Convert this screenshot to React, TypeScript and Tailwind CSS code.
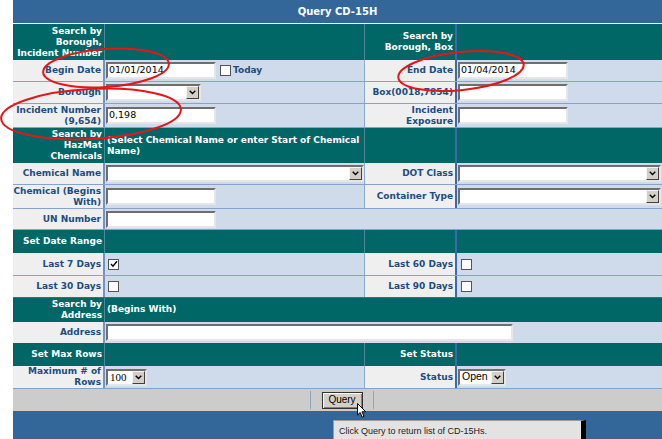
import React from "react";

const GRID = "grid grid-cols-[92px_260px_92px_1fr]";
const LROW = `${GRID} border-b border-[#87a2cc]`;
const TROW = `${GRID} bg-[#006666] text-white font-bold`;
const LBL = "flex items-center justify-end text-right pr-[2px] bg-[#efefef] text-[#1c4d80] font-bold leading-[11px]";
const VAL = "flex items-center pl-[1px] bg-[#cfdbeb]";
const C1 = "border-r-2 border-[#7393c6]";
const C2 = "border-r border-[#8fa9d0]";
const C3 = "border-r-2 border-[#3a69ad]";
const T1 = "border-r border-[#4b8a9a]";
const TCELL = "flex items-center justify-end text-right pr-[2px] leading-[11px]";

function TextBox({ className = "", value = "" }: { className?: string; value?: string }) {
  return (
    <div
      className={`h-[17px] bg-white border-2 border-t-[#6e6e6e] border-l-[#6e6e6e] border-r-[#e6e6e6] border-b-[#e6e6e6] flex items-center pl-[1px] text-[9.5px] font-normal text-black ${className}`}
    >
      {value}
    </div>
  );
}

function Select({ className = "", value = "", serif = false }: { className?: string; value?: string; serif?: boolean }) {
  return (
    <div
      className={`h-[17px] bg-white border-2 border-t-[#6e6e6e] border-l-[#6e6e6e] border-r-[#e6e6e6] border-b-[#e6e6e6] flex items-stretch ${className}`}
    >
      <div
        className={`flex-1 flex items-center pl-[2px] text-black font-normal ${
          serif ? "font-['Liberation_Serif',serif] text-[11px]" : "font-['Liberation_Sans',sans-serif] text-[10.5px]"
        }`}
      >
        {value}
      </div>
      <div className="w-[13px] bg-[#d4d0c8] border border-t-[#f4f4f4] border-l-[#f4f4f4] border-r-[#404040] border-b-[#404040] flex items-center justify-center">
        <svg width="7" height="5" viewBox="0 0 7 5">
          <path d="M0.7 0.7 L3.5 3.6 L6.3 0.7" stroke="#000" strokeWidth="1.4" fill="none" />
        </svg>
      </div>
    </div>
  );
}

function Check({ checked = false }: { checked?: boolean }) {
  return (
    <div className="w-[11px] h-[11px] bg-white border border-[#555] flex items-center justify-center">
      {checked && (
        <svg width="8" height="8" viewBox="0 0 8 8">
          <path d="M1 4 L3 6.2 L7 1.2" stroke="#000" strokeWidth="1.4" fill="none" />
        </svg>
      )}
    </div>
  );
}

export default function App() {
  return (
    <div className="relative w-[662px] h-[439px] overflow-hidden bg-white font-['DejaVu_Sans',Verdana,sans-serif] text-[9px]">
      <div className="ml-[13px] w-[649px]">
        {/* Header */}
        <div className="h-[24px] bg-[#336699] border-b border-white flex items-center justify-center text-white font-bold text-[10px]">
          Query CD-15H
        </div>

        {/* Search by Borough */}
        <div className={`${TROW} h-[36px]`}>
          <div className={`${TCELL} ${T1}`}>
            Search by
            <br />
            Borough,
            <br />
            Incident Number
          </div>
          <div className={T1}></div>
          <div className={`${TCELL} ${C3}`}>
            Search by
            <br />
            Borough, Box
          </div>
          <div></div>
        </div>

        {/* Begin Date */}
        <div className={`${LROW} h-[22px]`}>
          <div className={`${LBL} ${C1}`}>Begin Date</div>
          <div className={`${VAL} ${C2}`}>
            <TextBox className="w-[110px]" value="01/01/2014" />
            <div className="ml-[4px]">
              <Check />
            </div>
            <span className="ml-[2px] text-[#1c4d80] font-bold">Today</span>
          </div>
          <div className={`${LBL} ${C3}`}>End Date</div>
          <div className={VAL}>
            <TextBox className="w-[110px]" value="01/04/2014" />
          </div>
        </div>

        {/* Borough */}
        <div className={`${LROW} h-[22px]`}>
          <div className={`${LBL} ${C1}`}>Borough</div>
          <div className={`${VAL} ${C2}`}>
            <Select className="w-[95px]" />
          </div>
          <div className={`${LBL} ${C3}`}>Box(0018,7854)</div>
          <div className={VAL}>
            <TextBox className="w-[110px]" />
          </div>
        </div>

        {/* Incident Number */}
        <div className={`${LROW} h-[24px]`}>
          <div className={`${LBL} ${C1}`}>
            Incident Number
            <br />
            (9,654)
          </div>
          <div className={`${VAL} ${C2}`}>
            <TextBox className="w-[110px]" value="0,198" />
          </div>
          <div className={`${LBL} ${C3}`}>
            Incident
            <br />
            Exposure
          </div>
          <div className={VAL}>
            <TextBox className="w-[110px]" />
          </div>
        </div>

        {/* HazMat */}
        <div className={`${TROW} h-[35px]`}>
          <div className={`${TCELL} ${T1}`}>
            Search by
            <br />
            HazMat
            <br />
            Chemicals
          </div>
          <div className={`flex items-center pl-[2px] leading-[11px] ${T1}`}>
            (Select Chemical Name or enter Start of Chemical
            <br />
            Name)
          </div>
          <div className={C3}></div>
          <div></div>
        </div>

        {/* Chemical Name */}
        <div className={`${LROW} h-[22px]`}>
          <div className={`${LBL} ${C1}`}>Chemical Name</div>
          <div className={`${VAL} ${C2}`}>
            <Select className="w-[258px]" />
          </div>
          <div className={`${LBL} ${C3}`}>DOT Class</div>
          <div className={VAL}>
            <Select className="w-[203px]" />
          </div>
        </div>

        {/* Chemical begins */}
        <div className={`${LROW} h-[24px]`}>
          <div className={`${LBL} ${C1}`}>
            Chemical (Begins
            <br />
            With)
          </div>
          <div className={`${VAL} ${C2}`}>
            <TextBox className="w-[110px]" />
          </div>
          <div className={`${LBL} ${C3}`}>Container Type</div>
          <div className={VAL}>
            <Select className="w-[203px]" />
          </div>
        </div>

        {/* UN Number */}
        <div className={`${LROW} h-[21px]`}>
          <div className={`${LBL} ${C1}`}>UN Number</div>
          <div className={`${VAL} col-span-3`}>
            <TextBox className="w-[110px]" />
          </div>
        </div>

        {/* Set Date Range */}
        <div className={`${TROW} h-[23px]`}>
          <div className={`${TCELL} ${T1}`}>Set Date Range</div>
          <div className={T1}></div>
          <div className={C3}></div>
          <div></div>
        </div>

        {/* Last 7 / 60 */}
        <div className={`${LROW} h-[23px]`}>
          <div className={`${LBL} ${C1}`}>Last 7 Days</div>
          <div className={`${VAL} pl-[3px] ${C2}`}>
            <Check checked />
          </div>
          <div className={`${LBL} ${C3}`}>Last 60 Days</div>
          <div className={`${VAL} pl-[4px]`}>
            <Check />
          </div>
        </div>

        {/* Last 30 / 90 */}
        <div className={`${GRID} h-[21px]`}>
          <div className={`${LBL} ${C1}`}>Last 30 Days</div>
          <div className={`${VAL} pl-[3px] ${C2}`}>
            <Check />
          </div>
          <div className={`${LBL} ${C3}`}>Last 90 Days</div>
          <div className={`${VAL} pl-[4px]`}>
            <Check />
          </div>
        </div>

        {/* Search by Address */}
        <div className={`${TROW} h-[25px] border-t border-[#2f6f8f]`}>
          <div className={`${TCELL} ${T1}`}>
            Search by
            <br />
            Address
          </div>
          <div className="col-span-3 flex items-center pl-[2px]">(Begins With)</div>
        </div>

        {/* Address */}
        <div className={`${GRID} h-[21px]`}>
          <div className={`${LBL} ${C1}`}>Address</div>
          <div className={`${VAL} col-span-3`}>
            <TextBox className="w-[407px]" />
          </div>
        </div>

        {/* Set Max Rows */}
        <div className={`${TROW} h-[23px]`}>
          <div className={`${TCELL} ${T1}`}>Set Max Rows</div>
          <div className={T1}></div>
          <div className={`${TCELL} ${C3}`}>Set Status</div>
          <div></div>
        </div>

        {/* Maximum rows */}
        <div className={`${LROW} h-[23px]`}>
          <div className={`${LBL} ${C1}`}>
            Maximum # of
            <br />
            Rows
          </div>
          <div className={`${VAL} ${C2}`}>
            <Select className="w-[41px]" value="100" serif />
          </div>
          <div className={`${LBL} ${C3}`}>Status</div>
          <div className={VAL}>
            <Select className="w-[48px]" value="Open" />
          </div>
        </div>

        {/* Gray button bar */}
        <div className="h-[22px] bg-[#cccccc] flex items-center">
          <div className="w-[297px]"></div>
          <div className="w-px h-[18px] bg-[#8fa3c2]"></div>
          <div className="w-[62px] flex items-center justify-center">
            <button className="w-[41px] h-[17px] bg-[#d4d0c8] border border-[#333] shadow-[inset_1px_1px_0_#ffffff,inset_-1px_-1px_0_#808080] text-black font-['Liberation_Sans',sans-serif] text-[10px] leading-none flex items-center justify-center">
              Query
            </button>
          </div>
          <div className="w-px h-[18px] bg-[#8fa3c2]"></div>
        </div>

        {/* Footer */}
        <div className="h-[28px] bg-[#336699]"></div>
      </div>

      {/* Tooltip */}
      <div className="absolute left-[333px] top-[420px] w-[253px] h-[24px] bg-[#e3e3e3] border border-[#9a9a9a] border-r-[5px] border-r-black flex items-start pl-[5px] pt-[4px] font-['Liberation_Sans',Arial,sans-serif] text-[9px] text-[#222]">
        Click Query to return list of CD-15Hs.
      </div>

      {/* Cursor */}
      <svg className="absolute left-[357px] top-[403px]" width="11" height="16" viewBox="0 0 11 16">
        <path d="M0.5 0.5 L0.5 12 L3.2 9.5 L5.2 14.2 L7 13.4 L5 8.8 L8.8 8.8 Z" fill="#fff" stroke="#000" strokeWidth="1" strokeLinejoin="round" />
      </svg>

      {/* Red ellipses */}
      <svg className="absolute left-0 top-0 pointer-events-none" width="662" height="439" viewBox="0 0 662 439">
        <ellipse cx="106" cy="68" rx="63" ry="19" transform="rotate(-4 106 68)" fill="none" stroke="#e8141c" strokeWidth="2" />
        <ellipse cx="91" cy="114" rx="90" ry="25" transform="rotate(-3 91 114)" fill="none" stroke="#e8141c" strokeWidth="2" />
        <ellipse cx="461" cy="71" rx="63" ry="19" transform="rotate(-6 461 71)" fill="none" stroke="#e8141c" strokeWidth="2" />
      </svg>
    </div>
  );
}
